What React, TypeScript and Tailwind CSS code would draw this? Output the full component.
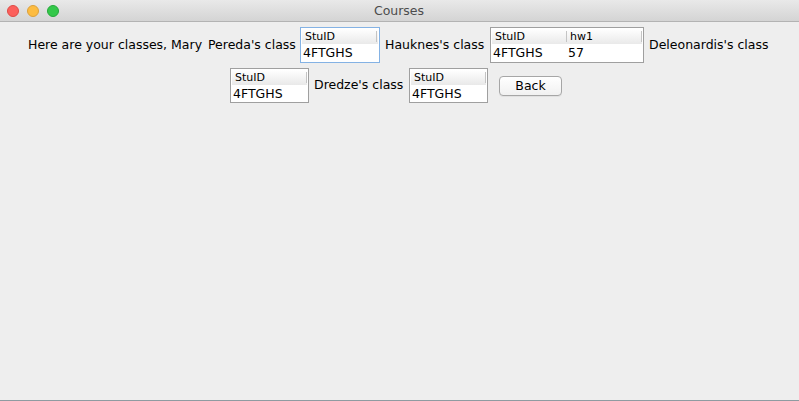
import React from "react";

const FONT = { fontFamily: '"DejaVu Sans", sans-serif' };

function Table({
  cols,
  rows,
  focused,
  tall,
  widthClass,
}: {
  cols: string[];
  rows: string[];
  focused?: boolean;
  tall?: boolean;
  widthClass: string;
}) {
  return (
    <div
      className={`${widthClass} ${tall ? "h-[36px]" : "h-[35px]"} shrink-0 bg-white border ${
        focused ? "border-[#84b2e4]" : "border-[#9f9f9f]"
      } p-[1px] flex flex-col`}
    >
      <div className="h-[15px] flex bg-gradient-to-b from-[#ffffff] to-[#e9e9e9]">
        {cols.map((c) => (
          <div key={c} className="w-[75px] flex items-stretch shrink-0">
            <div className="flex-1 pl-[3px] text-[11px] leading-[15px] text-black">{c}</div>
            <div className="w-px my-[2px] bg-[#c4c4c4]" />
          </div>
        ))}
      </div>
      <div className="flex">
        {rows.map((r, i) => (
          <div key={i} className="w-[75px] shrink-0 pl-[1px] text-[12.5px] leading-[17px] text-black">
            {r}
          </div>
        ))}
      </div>
    </div>
  );
}

export default function App() {
  return (
    <div className="w-[799px] h-[401px] bg-[#eeeeee] flex flex-col relative overflow-hidden" style={FONT}>
      <div className="h-[22px] shrink-0 bg-gradient-to-b from-[#e9e9e9] to-[#d4d4d4] border-b border-[#b3b3b3] flex items-center relative">
        <div className="flex items-center gap-[8px] pl-[7px]">
          <div className="w-[12px] h-[12px] rounded-full bg-[#fc605c] border border-[#de4b46]" />
          <div className="w-[12px] h-[12px] rounded-full bg-[#fdbc40] border border-[#dca13a]" />
          <div className="w-[12px] h-[12px] rounded-full bg-[#34c84a] border border-[#25a83a]" />
        </div>
        <div className="flex-1 text-center text-[12.5px] text-[#4c4c4c] pr-[60px] leading-[21px]">Courses</div>
      </div>

      <div className="pt-[5px] flex flex-col gap-[5px]">
        <div className="h-[36px] flex justify-start pl-[28px] items-center gap-[5px] text-[12.5px] text-black whitespace-nowrap">
          <div className="w-[175px] shrink-0">Here are your classes, Mary</div>
          <div className="w-[87px] shrink-0">Pereda's class</div>
          <Table cols={["StuID"]} rows={["4FTGHS"]} focused tall widthClass="w-[80px]" />
          <div className="w-[100px] shrink-0">Hauknes's class</div>
          <Table cols={["StuID", "hw1"]} rows={["4FTGHS", "57"]} tall widthClass="w-[154px]" />
          <div className="w-[121px] shrink-0">Deleonardis's class</div>
        </div>
        <div className="h-[35px] flex justify-start pl-[230px] items-center text-[12.5px] text-black whitespace-nowrap">
          <Table cols={["StuID"]} rows={["4FTGHS"]} widthClass="w-[79px]" />
          <div className="w-[89px] shrink-0 ml-[5px]">Dredze's class</div>
          <div className="ml-[6px]">
            <Table cols={["StuID"]} rows={["4FTGHS"]} widthClass="w-[79px]" />
          </div>
          <button className="ml-[11px] w-[63px] h-[20px] rounded-[4px] border border-[#a6a6a6] bg-gradient-to-b from-[#ffffff] to-[#f1f1f1] text-[12.5px] leading-[18px] text-black shadow-[0_1px_0_rgba(0,0,0,0.05)]">
            Back
          </button>
        </div>
      </div>

      <div className="absolute bottom-0 left-0 right-0 h-px bg-[#8f9ba1]" />
    </div>
  );
}
